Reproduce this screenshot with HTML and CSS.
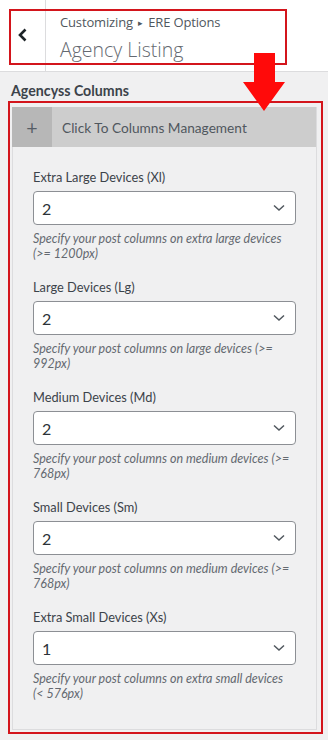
FILE: index.html
```html
<!DOCTYPE html>
<html>
<head>
<meta charset="utf-8">
<link rel="stylesheet" href="styles.css">
</head>
<body>
<div class="page">
  <header class="topbar">
    <div class="back">
      <svg width="12" height="14" viewBox="0 0 12 14"><path d="M8.5 1.5 L3 7 L8.5 12.5" fill="none" stroke="#1d2327" stroke-width="2.6"/></svg>
    </div>
    <div class="titles">
      <div class="crumb">Customizing <span class="tri">▸</span> ERE Options</div>
      <div class="title">Agency Listing</div>
    </div>
  </header>
  <div class="annot-top"></div>
  <svg class="annot-arrow" width="44" height="60" viewBox="0 0 44 60"><polygon points="11,0 32,0 32,29 42,29 21,58 0,29 11,29" fill="#ff0a0a"/></svg>

  <h2 class="section-title">Agencyss Columns</h2>
  <div class="annot-box">
    <div class="panel">
      <div class="panel-head">
        <span class="plus">+</span>
        <span class="panel-title">Click To Columns Management</span>
      </div>
      <div class="panel-body">
        <div class="field">
          <div class="label">Extra Large Devices (Xl)</div>
          <div class="select"><span>2</span><svg width="12" height="8" viewBox="0 0 12 8"><path d="M1 1.5 L6 6 L11 1.5" fill="none" stroke="#50575e" stroke-width="1.5"/></svg></div>
          <div class="desc">Specify your post columns on extra large devices (&gt;=&nbsp;1200px)</div>
        </div>
        <div class="field">
          <div class="label">Large Devices (Lg)</div>
          <div class="select"><span>2</span><svg width="12" height="8" viewBox="0 0 12 8"><path d="M1 1.5 L6 6 L11 1.5" fill="none" stroke="#50575e" stroke-width="1.5"/></svg></div>
          <div class="desc">Specify your post columns on large devices (&gt;= 992px)</div>
        </div>
        <div class="field">
          <div class="label">Medium Devices (Md)</div>
          <div class="select"><span>2</span><svg width="12" height="8" viewBox="0 0 12 8"><path d="M1 1.5 L6 6 L11 1.5" fill="none" stroke="#50575e" stroke-width="1.5"/></svg></div>
          <div class="desc">Specify your post columns on medium devices (&gt;= 768px)</div>
        </div>
        <div class="field">
          <div class="label">Small Devices (Sm)</div>
          <div class="select"><span>2</span><svg width="12" height="8" viewBox="0 0 12 8"><path d="M1 1.5 L6 6 L11 1.5" fill="none" stroke="#50575e" stroke-width="1.5"/></svg></div>
          <div class="desc">Specify your post columns on medium devices (&gt;= 768px)</div>
        </div>
        <div class="field">
          <div class="label">Extra Small Devices (Xs)</div>
          <div class="select"><span>1</span><svg width="12" height="8" viewBox="0 0 12 8"><path d="M1 1.5 L6 6 L11 1.5" fill="none" stroke="#50575e" stroke-width="1.5"/></svg></div>
          <div class="desc">Specify your post columns on extra small devices (&lt;&nbsp;576px)</div>
        </div>
      </div>
    </div>
  </div>
</div>
</body>
</html>
```
FILE: styles.css
```css
html, body {
  margin: 0;
  padding: 0;
}
body {
  background: #f0f0f1;
  font-family: "Open Sans", "Noto Sans", sans-serif;
  color: #3c434a;
}
.page {
  position: relative;
  width: 328px;
  height: 740px;
  overflow: hidden;
}
.topbar {
  display: flex;
  height: 71px;
  background: #fff;
  border-bottom: 1px solid #dcdcde;
}
.back {
  width: 46px;
  border-right: 1px solid #dcdcde;
  display: flex;
  align-items: center;
  justify-content: center;
  padding-bottom: 2px;
  box-sizing: border-box;
}
.titles {
  padding: 12px 0 0 14px;
}
.crumb {
  font-size: 13px;
  letter-spacing: -0.15px;
  line-height: 20px;
  color: #50575e;
}
.tri {
  font-size: 9px;
  vertical-align: 1px;
  margin: 0 2px;
}
.title {
  font-size: 19.5px;
  font-weight: 300;
  line-height: 28px;
  color: #646970;
  margin-top: 3px;
}
.annot-top {
  position: absolute;
  left: 9px;
  top: 9px;
  width: 274px;
  height: 52px;
  border: 2px solid #d3151c;
}
.annot-arrow {
  position: absolute;
  left: 243px;
  top: 53px;
  z-index: 2;
}
.section-title {
  margin: 9px 0 0 11px;
  font-family: "Lato", sans-serif;
  font-size: 14.2px;
  line-height: 20px;
  font-weight: 700;
  color: #3c434a;
}
.annot-box {
  margin: 0 5px 0 8px;
  border: 2px solid #d3151c;
  padding: 4px 4px 2px 2px;
}
.panel {
  border: 1px solid #dcdcde;
  border-top: none;
  background: #f0f0f1;
  font-family: "Lato", sans-serif;
}
.panel-head {
  display: flex;
  align-items: center;
  height: 40px;
  background: #cdcdcd;
}
.plus {
  width: 40px;
  height: 40px;
  background: #b7b7b7;
  display: flex;
  align-items: center;
  justify-content: center;
  font-family: "Open Sans", sans-serif;
  font-size: 20px;
  color: #555d66;
  margin-left: -1px;
}
.panel-title {
  margin-left: 10px;
  font-size: 13.7px;
  color: #50575e;
}
.panel-body {
  padding: 21px 20px 28px 20px;
}
.field + .field {
  margin-top: 17px;
}
.label {
  font-size: 12.8px;
  line-height: 18px;
  color: #3c434a;
  margin-bottom: 5px;
}
.select {
  display: flex;
  align-items: center;
  justify-content: space-between;
  height: 34px;
  box-sizing: border-box;
  background: #fff;
  border: 1px solid #8c8f94;
  border-radius: 4px;
  padding: 0 10px 0 8px;
  font-size: 16px;
  color: #2c3338;
}
.desc {
  margin-top: 6px;
  font-size: 12.5px;
  line-height: 15px;
  font-style: italic;
  color: #646970;
}
```
